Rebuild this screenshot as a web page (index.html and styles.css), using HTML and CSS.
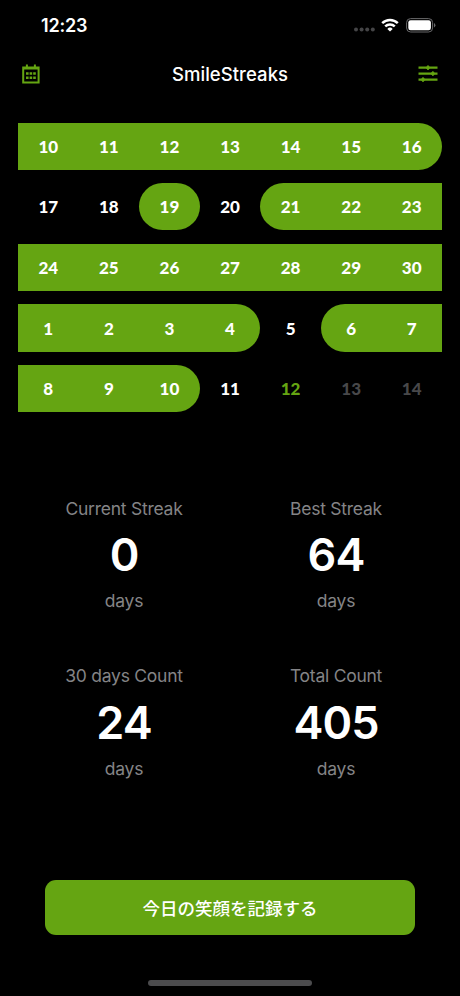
FILE: index.html
```html
<!DOCTYPE html>
<html lang="ja">
<head>
<meta charset="utf-8">
<title>SmileStreaks</title>
<link rel="stylesheet" href="styles.css">
</head>
<body>
<div class="screen">
  <div class="status">
    <span class="time">12:23</span>
    <div class="indicators">
      <svg class="dots" viewBox="0 0 21 5" width="21" height="5"><circle cx="2" cy="2.5" r="2"/><circle cx="7.6" cy="2.5" r="2"/><circle cx="13.2" cy="2.5" r="2"/><circle cx="18.8" cy="2.5" r="2"/></svg>
      <svg class="wifi" viewBox="0 0 18 14" width="18" height="14"><path d="M1.2 5.2a11.2 11.2 0 0 1 15.6 0M4.2 8.3a7 7 0 0 1 9.6 0" fill="none" stroke="#fff" stroke-width="2.5"/><path d="M9 13.6 6.3 10.9a3.9 3.9 0 0 1 5.4 0z" fill="#fff"/></svg>
      <svg class="battery" viewBox="0 0 30 15" width="30" height="15"><rect x=".6" y=".6" width="26" height="13.4" rx="4" fill="none" stroke="#69696b" stroke-width="1"/><rect x="2.3" y="2.3" width="22.6" height="10" rx="2.3" fill="#fff"/><path d="M28 5.1v4.4q1.4-.7 1.4-2.2T28 5.1z" fill="#69696b"/></svg>
    </div>
  </div>
  <header class="navbar">
    <svg viewBox="0 0 18 20" width="18" height="20"><path d="M1.2 3.6h15.4v15H1.2zM1 4.6h16M4.9 .4v3M12.9 .4v3" fill="none" stroke="#65a512" stroke-width="2"/><path d="M4 8.3h2.6v2.5H4zM7.6 8.3h2.6v2.5H7.6zM11.2 8.3h2.6v2.5h-2.6zM4 12.4h2.6v2.5H4zM7.6 12.4h2.6v2.5H7.6zM11.2 12.4h2.6v2.5h-2.6z" fill="#65a512"/></svg>
    <h1 class="title">SmileStreaks</h1>
    <svg viewBox="0 0 20 18" width="20" height="18"><path d="M.5 2.7h19M.5 8.6h19M.5 14.6h19" stroke="#65a512" stroke-width="2.2"/><path d="M8.2 2.7 10 .5l1.8 2.2L10 4.9zM13.1 8.6l1.8-2.2 1.8 2.2-1.8 2.2zM3.2 14.6 5 12.4l1.8 2.2L5 16.8z" fill="#65a512" stroke="#65a512"/></svg>
  </header>
  <main>
    <div class="calendar">
      <span class="on">10</span><span class="on">11</span><span class="on">12</span><span class="on">13</span><span class="on">14</span><span class="on">15</span><span class="on end">16</span>
      <span>17</span><span>18</span><span class="on start end">19</span><span>20</span><span class="on start">21</span><span class="on">22</span><span class="on">23</span>
      <span class="on">24</span><span class="on">25</span><span class="on">26</span><span class="on">27</span><span class="on">28</span><span class="on">29</span><span class="on">30</span>
      <span class="on">1</span><span class="on">2</span><span class="on">3</span><span class="on end">4</span><span>5</span><span class="on start">6</span><span class="on">7</span>
      <span class="on">8</span><span class="on">9</span><span class="on end">10</span><span>11</span><span class="today">12</span><span class="future">13</span><span class="future">14</span>
    </div>
    <div class="stats">
      <section class="stat"><h2>Current Streak</h2><strong>0</strong><p>days</p></section>
      <section class="stat"><h2>Best Streak</h2><strong>64</strong><p>days</p></section>
      <section class="stat"><h2>30 days Count</h2><strong>24</strong><p>days</p></section>
      <section class="stat"><h2>Total Count</h2><strong>405</strong><p>days</p></section>
    </div>
  </main>
  <button class="record">今日の笑顔を記録する</button>
  <div class="home"></div>
</div>
</body>
</html>
```
FILE: styles.css
```css
* { box-sizing: border-box; margin: 0; padding: 0; }
body { background: #000; color: #fff; font-family: Inter, "Noto Sans CJK JP", sans-serif; }
.screen { width: 460px; height: 996px; overflow: hidden; display: flex; flex-direction: column; }
.status { height: 51px; display: flex; justify-content: space-between; padding: 0 24px 0 41px; }
.time { font-size: 18px; font-weight: 600; line-height: 52px; letter-spacing: -.2px; }
.indicators { display: flex; padding-top: 18px; }
.dots { fill: #454547; margin: 9px 6px 0 0; }
.wifi { margin-right: 7px; }
.navbar { height: 45px; display: flex; align-items: center; justify-content: space-between; padding: 0 22px; }
.title { font-size: 18.5px; font-weight: 550; letter-spacing: .05px; padding-left: 2px; }
.calendar { display: grid; grid-template-columns: repeat(7, 1fr); grid-auto-rows: 47.3px; row-gap: 13.35px; margin: 26.5px 18px 0; }
.calendar span { display: flex; align-items: center; justify-content: center; font: 900 17px Lato, sans-serif; }
.calendar .on { background: #65a512; }
.calendar .start { border-top-left-radius: 24px; border-bottom-left-radius: 24px; }
.calendar .end { border-top-right-radius: 24px; border-bottom-right-radius: 24px; }
.calendar .today { color: #65a512; }
.calendar .future { color: #48484a; }
.stats { display: grid; grid-template-columns: 1fr 1fr; grid-auto-rows: 167.6px; margin: 83.4px 18px 0; text-align: center; }
.stat { display: flex; flex-direction: column; align-items: center; }
.stat h2, .stat p { font-size: 17.5px; font-weight: 400; line-height: 26px; letter-spacing: -.25px; color: #848486; }
.stat strong { font-size: 45px; font-weight: 600; line-height: 54px; margin: 6.4px 0 6px; letter-spacing: -1px; }
.record { width: 370px; height: 55.5px; margin: 49px auto 0; border: 0; border-radius: 11px; background: #65a512; color: #fff; font: 500 17.5px "Noto Sans CJK JP", sans-serif; }
.home { width: 164px; height: 6px; margin: 45px auto 0; border-radius: 3px; background: #4b4b4d; }
```
